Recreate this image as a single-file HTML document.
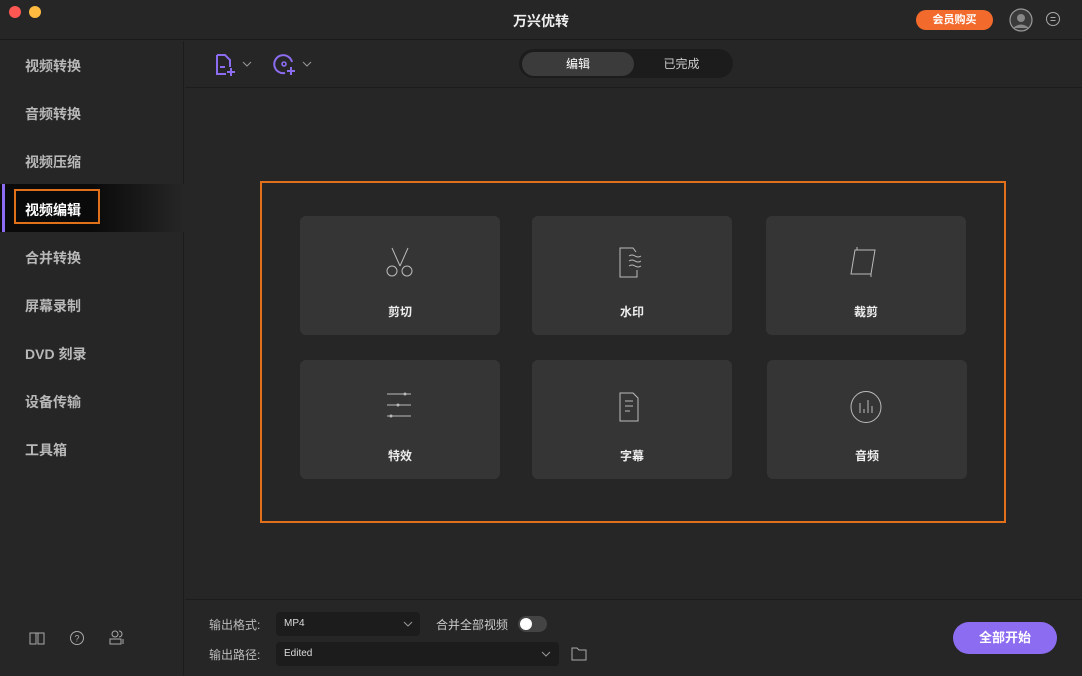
<!DOCTYPE html>
<html><head><meta charset="utf-8"><style>
*{margin:0;padding:0;box-sizing:border-box}
body{width:1082px;height:676px;background:#262626;font-family:"Liberation Sans","Noto Sans CJK SC",sans-serif;position:relative;overflow:hidden;color:#ddd}
.a{position:absolute}
.side{font-size:14px;color:#b8b8b8;left:25px;font-weight:bold}
.card{position:absolute;width:200px;height:119px;background:#353535;border-radius:6px}
.card svg{position:absolute;left:84px;top:30px}
.card span{position:absolute;left:0;right:0;top:87px;text-align:center;font-size:12px;color:#eee;font-weight:bold}
</style></head><body>
<div class="a" style="left:0;top:0;width:1082px;height:40px;background:#262626;border-bottom:1px solid #1a1a1a"></div>
<div class="a" style="left:9px;top:6px;width:12px;height:12px;border-radius:50%;background:#fc5753"></div>
<div class="a" style="left:29px;top:6px;width:12px;height:12px;border-radius:50%;background:#fdbc40"></div>
<div class="a" style="left:0;top:11px;width:1082px;text-align:center;font-size:14px;font-weight:bold;color:#eee">万兴优转</div>
<div class="a" style="left:916px;top:10px;width:77px;height:20px;border-radius:10px;background:#f26a2c;color:#fff;font-size:11px;text-align:center;line-height:20px;font-weight:bold">会员购买</div>
<svg class="a" style="left:1009px;top:8px" width="24" height="24"><circle cx="12" cy="12" r="11" fill="#3a3a3a" stroke="#999" stroke-width="1.2"/><circle cx="12" cy="10" r="4" fill="#888"/><path d="M4 20 Q12 13 20 20" fill="#888"/></svg>
<svg class="a" style="left:1045px;top:11px" width="16" height="16"><circle cx="8" cy="8" r="6.5" fill="none" stroke="#aaa"/><path d="M5.5 6.5h5M5.5 9.5h5" stroke="#aaa"/></svg>
<div class="a" style="left:0;top:41px;width:184px;height:635px;background:#262626;border-right:1px solid #1c1c1c"></div>
<div class="a side" style="top:56px">视频转换</div>
<div class="a side" style="top:104px">音频转换</div>
<div class="a side" style="top:152px">视频压缩</div>
<div class="a" style="left:0;top:184px;width:184px;height:48px;background:linear-gradient(90deg,#0a0a0a 50%,#262626)"></div>
<div class="a" style="left:2px;top:184px;width:3px;height:48px;background:#8c6cf0"></div>
<div class="a" style="left:14px;top:189px;width:86px;height:35px;border:2px solid #e0701a"></div>
<div class="a side" style="top:200px;color:#fff">视频编辑</div>
<div class="a side" style="top:248px">合并转换</div>
<div class="a side" style="top:296px">屏幕录制</div>
<div class="a side" style="top:344px">DVD 刻录</div>
<div class="a side" style="top:392px">设备传输</div>
<div class="a side" style="top:440px">工具箱</div>
<svg class="a" style="left:29px;top:631px" width="16" height="14"><path d="M1 2h6v11H1zM9 2h6v11H9z M7 2h2" fill="none" stroke="#aaa"/></svg>
<svg class="a" style="left:69px;top:630px" width="16" height="16"><circle cx="8" cy="8" r="6.5" fill="none" stroke="#aaa"/><text x="8" y="11.5" font-size="9" fill="#aaa" text-anchor="middle" font-family="Liberation Sans">?</text></svg>
<svg class="a" style="left:109px;top:629px" width="17" height="17"><circle cx="6" cy="5" r="3" fill="none" stroke="#aaa"/><path d="M10 2a3 3 0 0 1 0 6" fill="none" stroke="#aaa"/><rect x="1" y="10" width="11" height="5" fill="none" stroke="#aaa"/><path d="M14 10v5" stroke="#aaa"/></svg>
<div class="a" style="left:185px;top:87px;width:897px;height:1px;background:#1c1c1c"></div>
<svg class="a" style="left:214px;top:53px" width="24" height="24"><path d="M3 2h8l5 5v7 M3 2v19h9" fill="none" stroke="#8c6cf0" stroke-width="2"/><path d="M6 14h5M17 15v8M13 19h8" stroke="#8c6cf0" stroke-width="2"/></svg>
<svg class="a" style="left:242px;top:60px" width="10" height="8"><path d="M1 2l4 4 4-4" fill="none" stroke="#999"/></svg>
<svg class="a" style="left:273px;top:53px" width="24" height="24"><path d="M19 9A9 9 0 1 0 12 20" fill="none" stroke="#8c6cf0" stroke-width="2"/><circle cx="11" cy="11" r="2" fill="none" stroke="#8c6cf0" stroke-width="1.6"/><path d="M18 14v8M14 18h8" stroke="#8c6cf0" stroke-width="2"/></svg>
<svg class="a" style="left:302px;top:60px" width="10" height="8"><path d="M1 2l4 4 4-4" fill="none" stroke="#999"/></svg>
<div class="a" style="left:519px;top:49px;width:214px;height:29px;border-radius:15px;background:#1c1c1c"></div>
<div class="a" style="left:522px;top:52px;width:112px;height:24px;border-radius:12px;background:#3b3b3b;text-align:center;line-height:24px;font-size:12px;color:#fff">编辑</div>
<div class="a" style="left:634px;top:52px;width:95px;height:24px;text-align:center;line-height:24px;font-size:12px;color:#ccc">已完成</div>
<div class="a" style="left:260px;top:181px;width:746px;height:342px;border:2px solid #e0701a"></div>
<div class="card" style="left:300px;top:216px"><svg width="32" height="32"><path d="M8 2l8 18M24 2l-8 18" stroke="#bbb" fill="none"/><circle cx="8" cy="25" r="5" fill="none" stroke="#bbb"/><circle cx="23" cy="25" r="5" fill="none" stroke="#bbb"/></svg><span>剪切</span></div>
<div class="card" style="left:532px;top:216px"><svg width="32" height="32"><path d="M20 6L17 2H4v29h17v-7" fill="none" stroke="#bbb"/><path d="M13 10q3-2 6 0t6 0M13 15q3-2 6 0t6 0M13 20q3-2 6 0t6 0" fill="none" stroke="#bbb"/></svg><span>水印</span></div>
<div class="card" style="left:766px;top:216px"><svg width="32" height="32"><path d="M5 4h20l-4 24H1z" fill="none" stroke="#bbb"/><path d="M7 1v3M21 28v3" stroke="#bbb"/></svg><span>裁剪</span></div>
<div class="card" style="left:300px;top:360px"><svg width="32" height="32"><path d="M3 4h24M3 15h24M3 26h24" stroke="#bbb"/><circle cx="21" cy="4" r="1.5" fill="#bbb"/><circle cx="14" cy="15" r="1.5" fill="#bbb"/><circle cx="7" cy="26" r="1.5" fill="#bbb"/></svg><span>特效</span></div>
<div class="card" style="left:532px;top:360px"><svg width="32" height="32"><path d="M4 3h13l5 5v23H4z" fill="none" stroke="#bbb"/><path d="M9 11h8M9 16h8M9 21h5" stroke="#bbb"/></svg><span>字幕</span></div>
<div class="card" style="left:767px;top:360px"><svg width="34" height="34" style="left:83px;top:31px"><ellipse cx="16" cy="16" rx="15" ry="15.5" fill="none" stroke="#bbb"/><path d="M10 12v10M14 18v4M18 9v13M22 15v7" stroke="#bbb"/></svg><span>音频</span></div>
<div class="a" style="left:185px;top:599px;width:897px;height:1px;background:#1c1c1c"></div>
<div class="a" style="left:209px;top:616px;font-size:12px;color:#bbb">输出格式:</div>
<div class="a" style="left:276px;top:612px;width:144px;height:24px;background:#1c1c1c;border-radius:4px;font-size:10px;color:#ddd;padding:6px 8px">MP4</div>
<svg class="a" style="left:403px;top:620px" width="10" height="8"><path d="M1 2l4 4 4-4" fill="none" stroke="#999"/></svg>
<div class="a" style="left:436px;top:616px;font-size:12px;color:#ccc">合并全部视频</div>
<div class="a" style="left:518px;top:616px;width:29px;height:16px;border-radius:8px;background:#444"></div>
<div class="a" style="left:520px;top:618px;width:12px;height:12px;border-radius:50%;background:#fff"></div>
<div class="a" style="left:209px;top:646px;font-size:12px;color:#bbb">输出路径:</div>
<div class="a" style="left:276px;top:642px;width:283px;height:24px;background:#1c1c1c;border-radius:4px;font-size:10px;color:#ddd;padding:6px 8px">Edited</div>
<svg class="a" style="left:541px;top:650px" width="10" height="8"><path d="M1 2l4 4 4-4" fill="none" stroke="#999"/></svg>
<svg class="a" style="left:571px;top:647px" width="16" height="14"><path d="M1 1h5l2 2h7v10H1z" fill="none" stroke="#aaa"/></svg>
<div class="a" style="left:953px;top:622px;width:104px;height:32px;border-radius:16px;background:#8c6cf0;color:#fff;font-size:13px;font-weight:bold;text-align:center;line-height:32px">全部开始</div>
</body></html>
